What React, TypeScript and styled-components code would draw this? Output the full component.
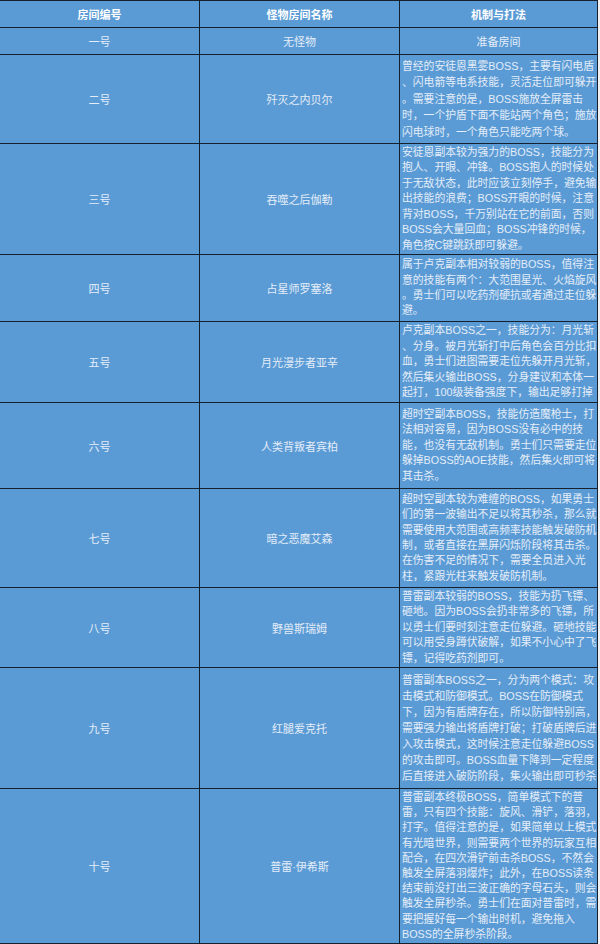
import styled, { createGlobalStyle } from "styled-components"

type Room = {
  no: string
  name: string
  lines: string[]
  h: number
  lh?: number
  plain?: boolean
}

const rooms: Room[] = [
  { no: "一号", name: "无怪物", lines: ["准备房间"], h: 27, plain: true },
  {
    no: "二号",
    name: "歼灭之内贝尔",
    h: 89,
    lh: 16.4,
    lines: [
      "曾经的安徒恩黑雾BOSS，主要有闪电盾",
      "、闪电箭等电系技能，灵活走位即可躲开",
      "。需要注意的是，BOSS施放全屏雷击",
      "时，一个护盾下面不能站两个角色；施放",
      "闪电球时，一个角色只能吃两个球。",
    ],
  },
  {
    no: "三号",
    name: "吞噬之后伽勒",
    h: 111,
    lines: [
      "安徒恩副本较为强力的BOSS，技能分为",
      "抱人、开眼、冲锋。BOSS抱人的时候处",
      "于无敌状态，此时应该立刻停手，避免输",
      "出技能的浪费；BOSS开眼的时候，注意",
      "背对BOSS，千万别站在它的前面，否则",
      "BOSS会大量回血；BOSS冲锋的时候，",
      "角色按C键跳跃即可躲避。",
    ],
  },
  {
    no: "四号",
    name: "占星师罗塞洛",
    h: 67,
    lines: [
      "属于卢克副本相对较弱的BOSS，值得注",
      "意的技能有两个：大范围星光、火焰旋风",
      "。勇士们可以吃药剂硬抗或者通过走位躲",
      "避。",
    ],
  },
  {
    no: "五号",
    name: "月光漫步者亚辛",
    h: 81,
    lines: [
      "卢克副本BOSS之一，技能分为：月光斩",
      "、分身。被月光斩打中后角色会百分比扣",
      "血，勇士们进图需要走位先躲开月光斩，",
      "然后集火输出BOSS，分身建议和本体一",
      "起打，100级装备强度下，输出足够打掉",
    ],
  },
  {
    no: "六号",
    name: "人类背叛者宾柏",
    h: 86,
    lines: [
      "超时空副本BOSS，技能仿造魔枪士，打",
      "法相对容易，因为BOSS没有必中的技",
      "能，也没有无敌机制。勇士们只需要走位",
      "躲掉BOSS的AOE技能，然后集火即可将",
      "其击杀。",
    ],
  },
  {
    no: "七号",
    name: "暗之恶魔艾森",
    h: 99,
    lines: [
      "超时空副本较为难缠的BOSS，如果勇士",
      "们的第一波输出不足以将其秒杀，那么就",
      "需要使用大范围或高频率技能触发破防机",
      "制，或者直接在黑屏闪烁阶段将其击杀。",
      "在伤害不足的情况下，需要全员进入光",
      "柱，紧跟光柱来触发破防机制。",
    ],
  },
  {
    no: "八号",
    name: "野兽斯瑞姆",
    h: 80,
    lines: [
      "普雷副本较弱的BOSS，技能为扔飞镖、",
      "砸地。因为BOSS会扔非常多的飞镖，所",
      "以勇士们要时刻注意走位躲避。砸地技能",
      "可以用受身蹲伏破解，如果不小心中了飞",
      "镖，记得吃药剂即可。",
    ],
  },
  {
    no: "九号",
    name: "红腿爱克托",
    h: 121,
    lh: 16,
    lines: [
      "普雷副本BOSS之一，分为两个模式：攻",
      "击模式和防御模式。BOSS在防御模式",
      "下，因为有盾牌存在，所以防御特别高，",
      "需要强力输出将盾牌打破；打破盾牌后进",
      "入攻击模式，这时候注意走位躲避BOSS",
      "的攻击即可。BOSS血量下降到一定程度",
      "后直接进入破防阶段，集火输出即可秒杀",
    ],
  },
  {
    no: "十号",
    name: "普雷·伊希斯",
    h: 155,
    lh: 15.2,
    lines: [
      "普雷副本终极BOSS，简单模式下的普",
      "雷，只有四个技能：旋风、滑铲，落羽，",
      "打字。值得注意的是，如果简单以上模式",
      "有光暗世界，则需要两个世界的玩家互相",
      "配合，在四次滑铲前击杀BOSS，不然会",
      "触发全屏落羽爆炸；此外，在BOSS读条",
      "结束前没打出三波正确的字母石头，则会",
      "触发全屏秒杀。勇士们在面对普雷时，需",
      "要把握好每一个输出时机，避免拖入",
      "BOSS的全屏秒杀阶段。",
    ],
  },
]

export default function App() {
  return (
    <>
      <GlobalStyle />
      <Table>
        <Row $h={27}>
          <HeadCell>房间编号</HeadCell>
          <HeadCell>怪物房间名称</HeadCell>
          <HeadCell>机制与打法</HeadCell>
        </Row>
        {rooms.map((r) => (
          <Row key={r.no} $h={r.h}>
            <Cell>{r.no}</Cell>
            <Cell>{r.name}</Cell>
            {r.plain ? (
              <Cell>{r.lines[0]}</Cell>
            ) : (
              <Desc $lh={r.lh ?? 15.4}>
                {r.lines.map((l, i) => (
                  <Line key={i}>{l}</Line>
                ))}
              </Desc>
            )}
          </Row>
        ))}
      </Table>
    </>
  )
}

const GlobalStyle = createGlobalStyle`
  body {
    margin: 0;
    background: #eef0f2;
    font-family: "Liberation Sans", "Noto Sans CJK SC", sans-serif;
  }
`

const Table = styled.div`
  width: 598px;
  height: 944px;
  background: #5b9bd5;
  border-top: 1px solid #17212d;
  box-sizing: border-box;
  overflow: hidden;
`

const Row = styled.div<{ $h: number }>`
  display: grid;
  grid-template-columns: 200px 200px 198px;
  height: ${(p) => p.$h}px;
  border-bottom: 1px solid #17212d;
  box-sizing: border-box;
`

const Cell = styled.div`
  display: flex;
  align-items: center;
  justify-content: center;
  border-right: 1px solid #17212d;
  color: #e4edf8;
  font-size: 11px;
  overflow: hidden;
`

const HeadCell = styled(Cell)`
  color: #ffffff;
  font-weight: 700;
`

const Desc = styled.div<{ $lh: number }>`
  display: flex;
  flex-direction: column;
  justify-content: center;
  padding-left: 2px;
  border-right: 1px solid #17212d;
  color: #e4edf8;
  font-size: 10.8px;
  line-height: ${(p) => p.$lh}px;
  overflow: hidden;
`

const Line = styled.div`
  white-space: nowrap;
`
